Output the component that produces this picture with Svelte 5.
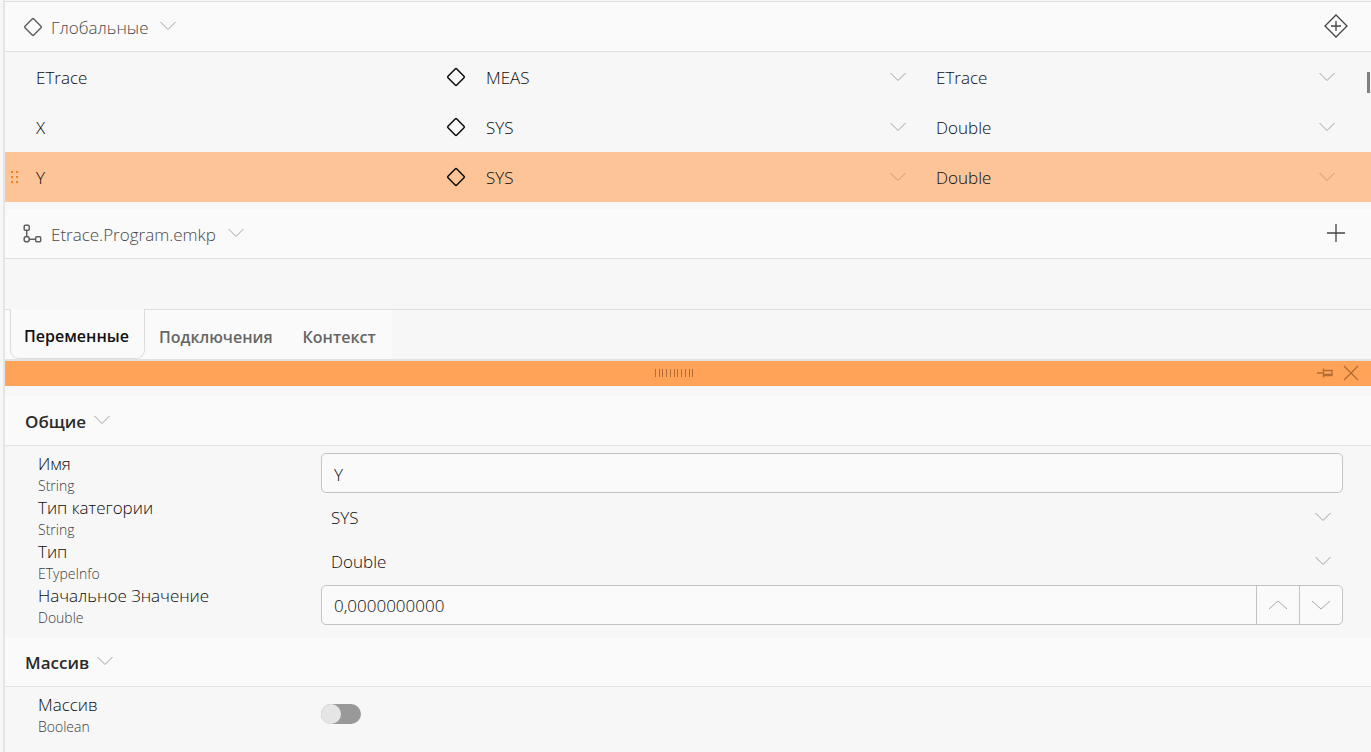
<script>
  let rows = $state([
    { name: 'ETrace', category: 'MEAS', type: 'ETrace' },
    { name: 'X', category: 'SYS', type: 'Double' },
    { name: 'Y', category: 'SYS', type: 'Double' }
  ]);
  let selected = $state(2);

  const categories = ['SYS', 'MEAS'];
  const types = ['Double', 'ETrace'];
  const tabs = ['Переменные', 'Подключения', 'Контекст'];
  let activeTab = $state(0);

  let name = $state('Y');
  let category = $state('SYS');
  let type = $state('Double');
  let initial = $state('0,0000000000');
  let isArray = $state(false);
</script>

{#snippet chevron()}
  <svg class="chevron" width="16" height="10" viewBox="0 0 16 10" aria-hidden="true">
    <path d="M0.5 1L8 8.5L15.5 1" />
  </svg>
{/snippet}

{#snippet diamond()}
  <svg class="diamond" width="20" height="20" viewBox="0 0 20 20" aria-hidden="true">
    <path d="M9.2 2L2 9.2Q1.2 10 2 10.8L9.2 18Q10 18.8 10.8 18L18 10.8Q18.8 10 18 9.2L10.8 2Q10 1.2 9.2 2Z" />
  </svg>
{/snippet}

<main class="panel">
  <header class="group top">
    <button class="toggle">
      {@render diamond()}
      <span>Глобальные</span>
      {@render chevron()}
    </button>
    <button class="add" aria-label="Добавить переменную">
      <svg width="24" height="24" viewBox="0 0 24 24" aria-hidden="true">
        <path d="M12 1L23 12L12 23L1 12ZM12 7V17M7 12H17" />
      </svg>
    </button>
  </header>

  <div class="rows">
    {#each rows as row, i}
      <div class="row" class:selected={selected === i}>
        <svg class="grip" width="10" height="14" viewBox="0 0 10 14" aria-hidden="true">
          <path d="M1 1h2v2h-2zM6 1h2v2h-2zM1 6h2v2h-2zM6 6h2v2h-2zM1 11h2v2h-2zM6 11h2v2h-2z" />
        </svg>
        <button class="name" onclick={() => (selected = i)}>{row.name}</button>
        {@render diamond()}
        <div class="pick">
          <select aria-label="Тип категории" bind:value={row.category}>
            {#each categories as c}<option>{c}</option>{/each}
          </select>
          {@render chevron()}
        </div>
        <div class="pick">
          <select aria-label="Тип" bind:value={row.type}>
            {#each types as t}<option>{t}</option>{/each}
          </select>
          {@render chevron()}
        </div>
      </div>
    {/each}
    <div class="thumb"></div>
  </div>

  <header class="group program">
    <button class="toggle">
      <svg class="nodes" width="20" height="20" viewBox="0 0 20 20" aria-hidden="true">
        <rect x="1.2" y="1.2" width="5" height="5" rx="1" />
        <rect x="12.7" y="12.7" width="5" height="5" rx="1" />
        <circle cx="3.7" cy="15.2" r="2.6" />
        <path d="M3.7 6.2V12.6M6.3 15.2H12.7" />
      </svg>
      <span>Etrace.Program.emkp</span>
      {@render chevron()}
    </button>
    <button class="add" aria-label="Добавить">
      <svg width="24" height="24" viewBox="0 0 24 24" aria-hidden="true">
        <path d="M12 3V21M3 12H21" />
      </svg>
    </button>
  </header>

  <nav class="tabs">
    <div class="strip">
      {#each tabs as tab, i}
        <button class="tab" class:active={activeTab === i} onclick={() => (activeTab = i)}>{tab}</button>
      {/each}
    </div>
  </nav>

  <div class="titlebar">
    <svg class="ticks" width="40" height="8" viewBox="0 0 40 8" aria-hidden="true">
      <path d="M1.5 0V8M5.5 0V8M8.5 0V8M12.5 0V8M16.5 0V8M20.5 0V8M23.5 0V8M27.5 0V8M31.5 0V8M35.5 0V8M38.5 0V8" />
    </svg>
    <div class="actions">
      <button aria-label="Закрепить">
        <svg width="16" height="10" viewBox="0 0 16 10" aria-hidden="true">
          <path d="M0 5H6M6.5 0.5V9.5M6.5 2.5H15V7.5H6.5M6.5 6.5H15" />
        </svg>
      </button>
      <button aria-label="Закрыть">
        <svg width="16" height="16" viewBox="0 0 16 16" aria-hidden="true">
          <path d="M1 1L15 15M15 1L1 15" />
        </svg>
      </button>
    </div>
  </div>

  <section>
    <h2><button class="toggle"><span>Общие</span> {@render chevron()}</button></h2>
    <div class="fields">
      <div class="field">
        <label for="f-name">Имя<small>String</small></label>
        <input id="f-name" class="box" type="text" bind:value={name} />
      </div>
      <div class="field">
        <label for="f-category">Тип категории<small>String</small></label>
        <div class="pick">
          <select id="f-category" bind:value={category}>
            {#each categories as c}<option>{c}</option>{/each}
          </select>
          {@render chevron()}
        </div>
      </div>
      <div class="field">
        <label for="f-type">Тип<small>ETypeInfo</small></label>
        <div class="pick">
          <select id="f-type" bind:value={type}>
            {#each types as t}<option>{t}</option>{/each}
          </select>
          {@render chevron()}
        </div>
      </div>
      <div class="field">
        <label for="f-initial">Начальное Значение<small>Double</small></label>
        <div class="box spinner">
          <input id="f-initial" type="text" bind:value={initial} />
          <button aria-label="Увеличить">
            <svg width="20" height="10" viewBox="0 0 20 10" aria-hidden="true"><path d="M1 9L10 1L19 9" /></svg>
          </button>
          <button aria-label="Уменьшить">
            <svg width="20" height="10" viewBox="0 0 20 10" aria-hidden="true"><path d="M1 1L10 9L19 1" /></svg>
          </button>
        </div>
      </div>
    </div>
  </section>

  <section>
    <h2><button class="toggle"><span>Массив</span> {@render chevron()}</button></h2>
    <div class="fields">
      <div class="field">
        <label for="f-array">Массив<small>Boolean</small></label>
        <input id="f-array" class="switch" type="checkbox" role="switch" bind:checked={isArray} />
      </div>
    </div>
  </section>
</main>

<style>
  :global(body) {
    margin: 0;
    background: #f7f7f7;
  }
  .panel {
    box-sizing: border-box;
    min-height: 100vh;
    margin-left: 3px;
    border-left: 2px solid #e5e5e5;
    font: 300 17px/22px 'Open Sans', 'Noto Sans', sans-serif;
    color: #0c0c0c;
    overflow: hidden;
  }
  button,
  input,
  select {
    font: inherit;
    color: inherit;
    background: none;
    border: 0;
    margin: 0;
    padding: 0;
    min-width: 0;
  }
  button {
    cursor: pointer;
  }
  svg {
    display: block;
    flex: none;
    fill: none;
    stroke: currentColor;
  }
  .chevron {
    color: #a0a0a0;
  }
  .group {
    display: flex;
    align-items: center;
    justify-content: space-between;
    height: 49px;
    padding: 0 23px 0 18px;
    background: #fafafa;
    border-bottom: 1px solid #dfdfdf;
    color: #484848;
  }
  .top {
    margin-top: 1px;
    border-top: 1px solid #dfdfdf;
  }
  .program {
    margin-top: 7px;
  }
  .toggle {
    display: flex;
    align-items: center;
    gap: 8px;
  }
  .toggle span {
    padding-top: 2px;
  }
  .toggle .chevron {
    margin: 0 0 2px 4px;
  }
  .diamond,
  .nodes {
    stroke-width: 1.5;
  }
  .group .diamond,
  .nodes {
    color: #606060;
  }
  .add {
    margin-bottom: 2px;
    color: #444;
  }
  .add svg {
    stroke-width: 1.3;
  }
  .rows {
    position: relative;
  }
  .row {
    display: grid;
    grid-template-columns: 10px minmax(0, 406fr) 20px minmax(0, 440fr) minmax(0, 419fr);
    column-gap: 10px;
    align-items: center;
    height: 50px;
    padding: 0 26px 0 5px;
  }
  .row .name {
    margin-left: 6px;
    height: 50px;
    padding-top: 2px;
    text-align: left;
  }
  .grip {
    visibility: hidden;
    fill: #e8821e;
    stroke: none;
  }
  .selected {
    background: #fdc497;
  }
  .selected .grip {
    visibility: visible;
  }
  .selected .chevron {
    color: #cc9a72;
  }
  .thumb {
    position: absolute;
    top: 20px;
    right: 1px;
    width: 3px;
    height: 21px;
    background: #808080;
  }
  .pick {
    display: grid;
    align-items: center;
  }
  .pick > select,
  .pick > .chevron {
    grid-area: 1 / 1;
  }
  .pick > select {
    appearance: none;
    height: 40px;
    padding: 1px 36px 0 10px;
  }
  .pick > .chevron {
    justify-self: end;
    margin-right: 10px;
    pointer-events: none;
  }
  .field .pick > .chevron {
    margin-right: 12px;
  }
  .tabs {
    margin-top: 50px;
    border-top: 1px solid #dfdfdf;
    border-bottom: 2px solid #e2e2e2;
  }
  .strip {
    display: flex;
    width: max-content;
    height: 49px;
    padding: 0 0 0 5px;
    background: #fafafa;
  }
  .tab {
    padding: 4px 16px 0 14px;
    font-size: 16px;
    font-weight: 600;
    color: #666;
  }
  .tab.active {
    margin-top: -1px;
    padding: 4px 15px 0 13px;
    background: #fafafa;
    border: 1px solid #dcdcdc;
    border-top: 0;
    border-radius: 0 0 9px 9px;
    color: #111;
  }
  .titlebar {
    display: grid;
    grid-template-columns: 26px minmax(0, 1fr) 42px;
    align-items: center;
    height: 24px;
    padding: 0 12px 1px 0;
    background: #ffa359;
    color: #b56c35;
  }
  .ticks {
    grid-column: 2;
    justify-self: center;
  }
  .actions {
    display: flex;
    justify-content: flex-end;
    align-items: center;
    gap: 10px;
  }
  .actions svg {
    stroke-width: 1.4;
  }
  section:first-of-type {
    margin-top: 10px;
  }
  h2 {
    display: flex;
    height: 49px;
    margin: 0;
    padding-left: 20px;
    background: #fafafa;
    border-bottom: 1px solid #e2e2e2;
    font-size: 17px;
    font-weight: 600;
    color: #2a2a2a;
  }
  h2 .toggle {
    gap: 4px;
  }
  .fields {
    padding: 5px 28px 10px 33px;
  }
  .field {
    display: grid;
    grid-template: 44px / 283px minmax(0, 1fr);
    align-items: center;
  }
  label {
    align-self: start;
    padding-top: 2px;
  }
  label small {
    display: block;
    font-size: 14px;
    color: #3c3c3c;
  }
  .box {
    box-sizing: border-box;
    height: 40px;
    border: 1px solid #c3c3c3;
    border-radius: 5px;
    background: #fafafa;
  }
  input.box,
  .spinner input {
    padding: 2px 12px 0;
  }
  .spinner {
    display: grid;
    grid-template-columns: minmax(0, 1fr) 43px 43px;
  }
  .spinner button {
    display: grid;
    place-items: center;
    border-left: 1px solid #c3c3c3;
    color: #a8a8a8;
  }
  .switch {
    appearance: none;
    width: 40px;
    height: 20px;
    border-radius: 10px;
    background: #999;
    cursor: pointer;
  }
  .switch::before {
    content: '';
    display: block;
    width: 20px;
    height: 20px;
    border-radius: 50%;
    background: #e5e5e5;
  }
  .switch:checked::before {
    margin-left: 20px;
  }
</style>
